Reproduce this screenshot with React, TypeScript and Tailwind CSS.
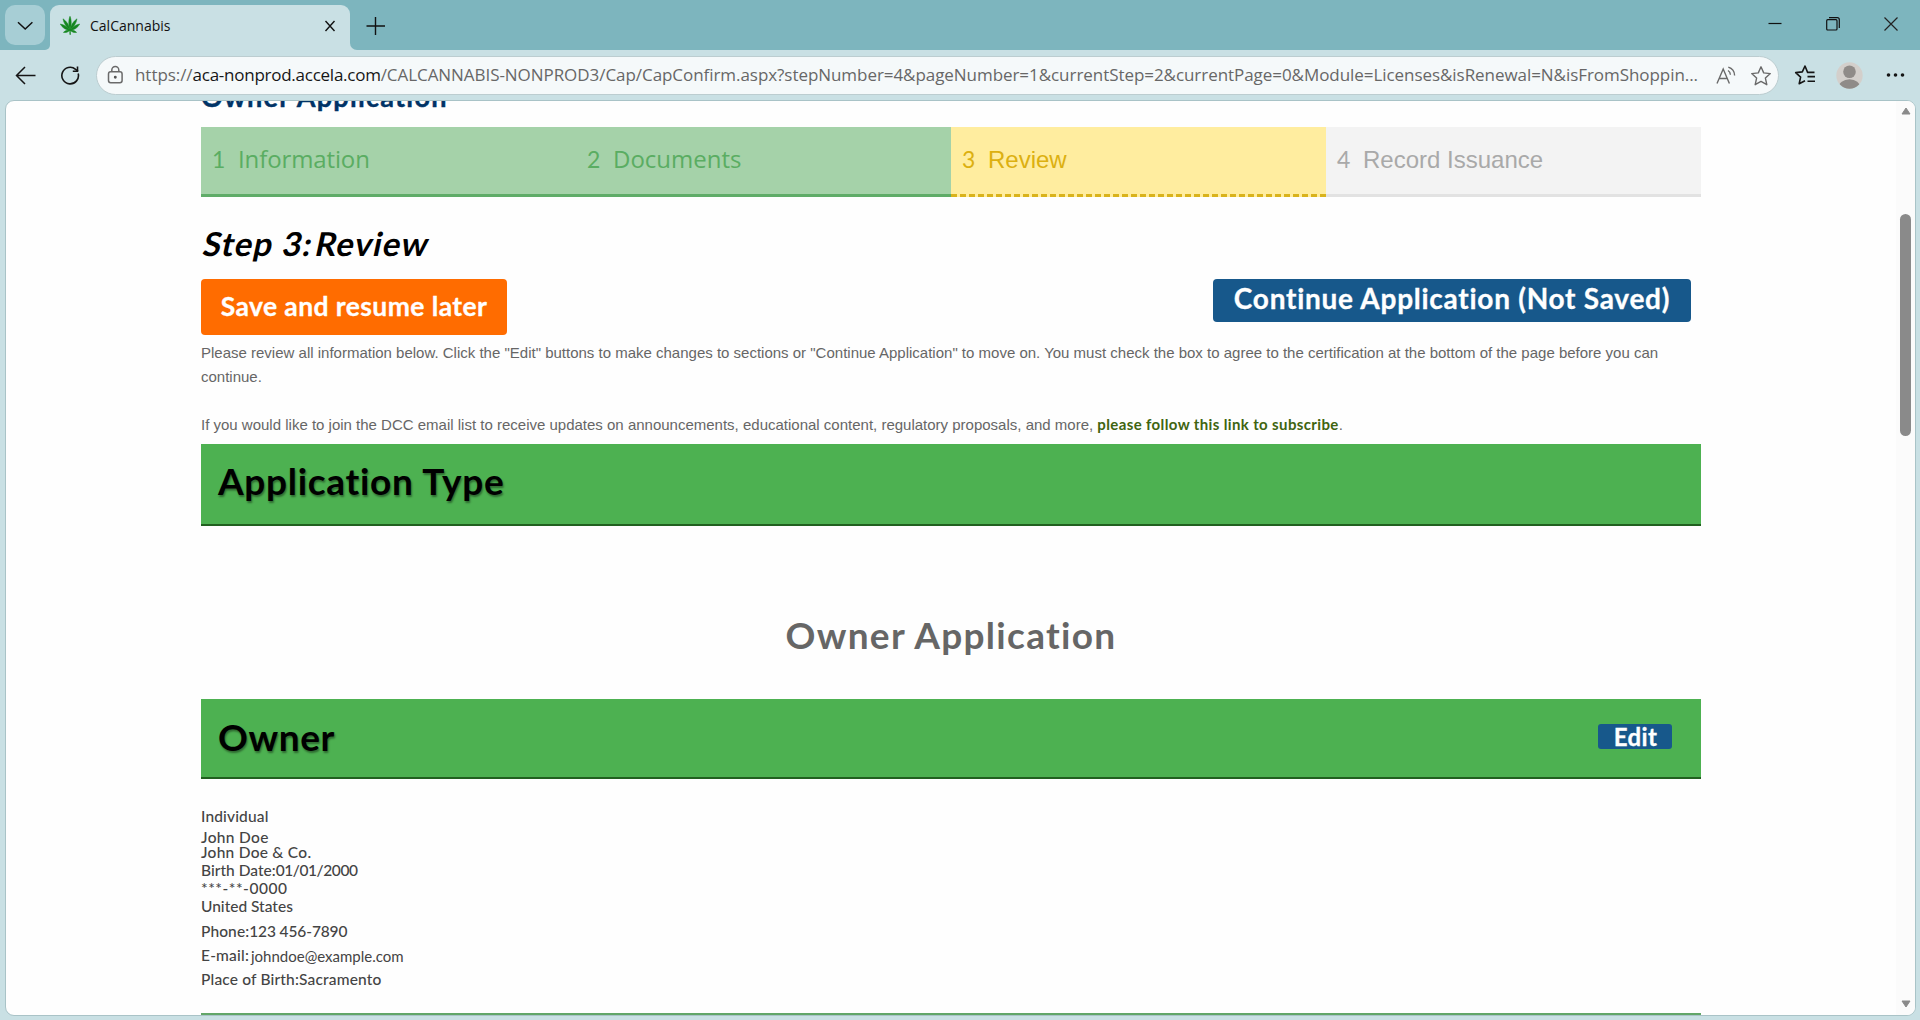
import type { ReactNode } from "react";

function LeafIcon() {
  return (
    <svg width="20" height="20" viewBox="0 0 20 20" fill="#14861f" stroke="#14861f" strokeWidth="0.500" strokeLinejoin="round">
      <path d="M10 0.300C8.500 3.600 8.200 8.800 10 14C11.800 8.800 11.500 3.600 10 0.300Z" />
      <path d="M3 2.800C3.600 7 6.200 11 9.800 14C9.400 9.400 6.800 5.400 3 2.800Z" />
      <path d="M17 2.800C16.400 7 13.800 11 10.200 14C10.600 9.400 13.200 5.400 17 2.800Z" />
      <path d="M0.300 8C2.300 11.800 5.600 13.900 9.800 14.400C7.600 11 4.300 8.800 0.300 8Z" />
      <path d="M19.700 8C17.700 11.800 14.400 13.900 10.200 14.400C12.400 11 15.700 8.800 19.700 8Z" />
      <path d="M3.400 16.400C5.700 16.900 8 16.300 9.900 14.200C7.500 13.800 5.300 14.600 3.400 16.400Z" />
      <path d="M16.600 16.400C14.300 16.900 12 16.300 10.100 14.200C12.500 13.800 14.700 14.600 16.600 16.400Z" />
      <path d="M9.700 13.500H10.300L10.500 18.500H9.800Z" />
    </svg>
  );
}

function TitleBar() {
  return (
    <div className="flex h-[50px] items-end bg-[#7db5be]">
      <div className="mb-[5px] ml-[5px] flex h-10 w-10 items-center justify-center rounded-[10px] bg-[#a7ced5]">
        <svg width="18" height="12" viewBox="0 0 18 12" fill="none" stroke="#111" strokeWidth="1.5">
          <path d="M2 3.200L9.200 10L16.400 3.200" />
        </svg>
      </div>
      <div className="h-[6px] w-[5px] bg-[#c9e0e4]">
        <div className="h-full w-full rounded-br-[6px] bg-[#7db5be]" />
      </div>
      <div className="flex h-[45px] w-[300px] items-center rounded-t-[9px] bg-[#c9e0e4] pb-[4px] pl-[10px] pr-[13px]">
        <LeafIcon />
        <span className="ml-[10px] flex-1 font-['Open_Sans'] text-[14px] text-[#111]">CalCannabis</span>
        <svg width="14" height="14" viewBox="0 0 14 14" fill="none" stroke="#111" strokeWidth="1.400">
          <path d="M2.500 2L11.500 12M11.500 2L2.500 12" />
        </svg>
      </div>
      <div className="h-[7px] w-[7px] bg-[#c9e0e4]">
        <div className="h-full w-full rounded-bl-[7px] bg-[#7db5be]" />
      </div>
      <div className="ml-[8px] flex h-[50px] flex-1 items-center pt-px">
        <svg width="20" height="20" viewBox="0 0 20 20" fill="none" stroke="#111" strokeWidth="1.400">
          <path d="M10.500 1V19M1.500 10H20" />
        </svg>
      </div>
      <div className="mb-[1px] mr-[1px] flex h-[50px] items-center">
        <div className="flex w-[58px] justify-center">
          <svg width="14" height="14" viewBox="0 0 14 14" stroke="#111" strokeWidth="1.200">
            <path d="M0.500 6.500H13.500" />
          </svg>
        </div>
        <div className="flex w-[58px] justify-center">
          <svg width="14" height="14" viewBox="0 0 14 14" fill="none" stroke="#111" strokeWidth="1.200">
            <rect x="0.700" y="2.700" width="10.300" height="10.300" rx="1" />
            <path d="M3 0.700H11.300A2 2 0 0 1 13.300 2.700V11" />
          </svg>
        </div>
        <div className="flex w-[57px] justify-center">
          <svg width="14" height="14" viewBox="0 0 14 14" fill="none" stroke="#222" strokeWidth="1.200">
            <path d="M0.500 0.500L13.500 13.500M13.500 0.500L0.500 13.500" />
          </svg>
        </div>
      </div>
    </div>
  );
}

function AddressBar() {
  return (
    <div className="flex h-[50px] items-center bg-[#c9e0e4]">
      <svg className="ml-[15px]" width="21" height="20" viewBox="0 0 21 20" fill="none" stroke="#151515" strokeWidth="1.500">
        <path d="M20.500 10.500H1.500M10 2L1.500 10.500L10 19" />
      </svg>
      <svg className="ml-[24px]" width="20" height="20" viewBox="0 0 20 20" fill="none" stroke="#151515" strokeWidth="1.600">
        <path d="M18.200 8.500A8.300 8.300 0 1 1 15.600 4.300L18 6.200" />
        <path d="M17.500 1.500V6.200H12.800" />
      </svg>
      <div className="ml-[16px] mt-[1px] flex h-[39px] w-[1683px] items-center rounded-full border border-[#bccdd0] bg-[#f5f9fa] pl-[10px]">
        <svg className="mb-[2px]" width="17" height="20" viewBox="0 0 17 20" fill="none" stroke="#6a6a6a" strokeWidth="1.500">
          <rect x="1.500" y="6.800" width="13.600" height="11" rx="2.200" />
          <path d="M4.800 6.800V5A3.500 3.500 0 0 1 11.800 5V6.800" />
          <circle cx="8.300" cy="12.300" r="0.700" fill="#555" stroke="#555" />
        </svg>
        <div className="ml-[11px] w-[1576px] whitespace-nowrap pb-[2px] font-['Open_Sans'] text-[17px] tracking-[-0.055px] text-[#676767]">
          https://<span className="tracking-[-0.25px] text-[#161616]">aca-nonprod.accela.com</span>
          /CALCANNABIS-NONPROD3/Cap/CapConfirm.aspx?stepNumber=4&amp;pageNumber=1&amp;currentStep=2&amp;currentPage=0&amp;Module=Licenses&amp;isRenewal=N&amp;isFromShoppin...
        </div>
        <svg className="ml-[5px]" width="20" height="20" viewBox="0 0 20 20" fill="none" stroke="#6a6a6a" strokeWidth="1.400">
          <path d="M1 17.500L7.200 3L13.400 17.500M3.400 12.500H11" />
          <path d="M12 4.500A5 5 0 0 1 14.400 8.800M12.300 1.200A9 9 0 0 1 18.600 9.500" />
        </svg>
        <svg className="ml-[14px]" width="22" height="22" viewBox="0 0 22 22" fill="none" stroke="#6a6a6a" strokeWidth="1.400" strokeLinejoin="round">
          <path d="M11 1.800L13.700 7.900L20.300 8.600L15.400 13.100L16.800 19.700L11 16.400L5.200 19.700L6.600 13.100L1.700 8.600L8.300 7.900Z" />
        </svg>
      </div>
      <svg className="ml-[15px]" width="22" height="22" viewBox="0 0 22 22" fill="none" stroke="#151515" strokeWidth="1.600" strokeLinejoin="round">
        <path d="M20.500 8.400H13.600L11 2L8.300 7.900L1.700 8.600L6.600 13.100L5.200 19.700L11 16.700" />
        <path d="M13.500 12.600H21M13.500 17.200H21" />
      </svg>
      <svg className="ml-[20px]" width="27" height="27" viewBox="0 0 27 27">
        <clipPath id="avatar">
          <circle cx="13.500" cy="13.500" r="13.200" />
        </clipPath>
        <circle cx="13.500" cy="13.500" r="13.200" fill="#d3cfcb" />
        <g clipPath="url(#avatar)" fill="#8f8b88">
          <circle cx="13.500" cy="9.800" r="6.300" />
          <ellipse cx="13.500" cy="26" rx="11" ry="8.700" />
        </g>
      </svg>
      <svg className="ml-[23px]" width="20" height="6" viewBox="0 0 20 6" fill="#151515">
        <circle cx="2.500" cy="3" r="1.800" />
        <circle cx="9.500" cy="3" r="1.800" />
        <circle cx="16.500" cy="3" r="1.800" />
      </svg>
    </div>
  );
}

function Step({ n, className, children }: { n: number; className: string; children: ReactNode }) {
  return (
    <div className={`flex h-[70px] w-[375px] items-baseline border-b-[3px] pl-[11px] pt-[14px] text-[24px] leading-[36px] ${className}`}>
      <span className="w-[26px] font-['Lato'] text-[23px]">{n}</span>
      {children}
    </div>
  );
}

function ScrollBar() {
  return (
    <div className="flex w-[19px] flex-col items-center bg-[#fbfbfb] pt-[6px]">
      <svg width="10" height="8" viewBox="0 0 10 8" fill="#8a8a8a" stroke="#8a8a8a" strokeLinejoin="round">
        <path d="M5 1L9 7H1Z" />
      </svg>
      <div className="mt-[99px] h-[222px] w-[11px] rounded-full bg-[#8a8a8a]" />
      <div className="flex-1" />
      <svg className="mb-[7px]" width="10" height="8" viewBox="0 0 10 8" fill="#8a8a8a" stroke="#8a8a8a" strokeLinejoin="round">
        <path d="M5 7L9 1H1Z" />
      </svg>
    </div>
  );
}

export default function App() {
  return (
    <div className="flex h-[1020px] w-[1920px] flex-col overflow-hidden bg-[#c9e0e4]">
      <TitleBar />
      <AddressBar />
      <div className="ml-[5px] flex h-[916px] w-[1911px] overflow-hidden rounded-[9px] border border-[#a9c3c7] bg-[#fefefe]">
        <main className="ml-[195px] w-[1500px] font-['Lato']">
          <h1 className="-mt-[20px] h-8 whitespace-nowrap text-[27px] font-bold leading-8 tracking-[1.250px] text-[#003366] [-webkit-text-stroke:0.400px_#003366]">Owner Application</h1>

          <div className="mt-[14px] flex">
            <Step n={1} className="border-[#5fac68] bg-[#a5d2a9] text-[#5aad62]">
              <span className="font-['Open_Sans'] tracking-[-0.120px]">Information</span>
            </Step>
            <Step n={2} className="border-[#5fac68] bg-[#a5d2a9] text-[#5aad62]">
              <span className="font-['Open_Sans']">Documents</span>
            </Step>
            <Step n={3} className="border-dashed border-[#d9b31c] bg-[#ffed9f] text-[#dcb011]">
              <span className="font-['Liberation_Sans']">Review</span>
            </Step>
            <Step n={4} className="border-[#e2e2e2] bg-[#f3f3f3] text-[#a9a9a9]">
              <span className="font-['Liberation_Sans']">Record Issuance</span>
            </Step>
          </div>

          <h2 className="mt-[26px] flex h-10 pl-[3px] text-[33px] font-bold leading-10 text-black">
            <span className="-skew-x-12 tracking-[1.100px]">
              Step 3<span className="tracking-[4px]">:</span>Review
            </span>
          </h2>

          <div className="mt-4 flex w-[1490px] items-start justify-between font-bold text-white [-webkit-text-stroke:0.300px_white]">
            <button className="h-14 w-[306px] whitespace-nowrap rounded-[4px] bg-[#ff6c00] pb-[1px] text-[26.500px] leading-[53px] tracking-[0.400px]">Save and resume later</button>
            <button className="h-[43px] w-[478px] whitespace-nowrap rounded-[4px] bg-[#17588b] pb-[5px] text-[28px] leading-[36px] tracking-[0.740px]">Continue Application (Not Saved)</button>
          </div>

          <p className="mt-[6px] h-[96px] font-['Liberation_Sans'] text-[15px] leading-6 text-[#666]">
            Please review all information below. Click the "Edit" buttons to make changes to sections or "Continue Application" to move on. You must check the box to agree to the certification at the bottom of the page before you can
            continue.
            <br />
            <br />
            If you would like to join the DCC email list to receive updates on announcements, educational content, regulatory proposals, and more,{" "}
            <a className="font-['Lato'] font-bold leading-none tracking-[0.370px] text-[#3f6410]">please follow this link to subscribe</a>.
          </p>

          <section className="mt-[7px] h-[82px] border-b-2 border-[#21601f] bg-[#4db151] pl-[17px] text-[37px] font-bold leading-[74px] tracking-[0.700px] text-black [text-shadow:1px_2px_2px_rgba(0,0,0,0.4)]">
            Application Type
          </section>

          <div className="mt-[87px] h-11 text-center text-[37px] font-bold leading-[44px] tracking-[1.300px] text-[#666]">Owner Application</div>

          <section className="mt-[42px] flex h-[80px] items-start justify-between border-b-2 border-[#21601f] bg-[#4db151] pl-[17px] pr-[29px] font-bold [text-shadow:1px_2px_2px_rgba(0,0,0,0.4)]">
            <span className="text-[37px] leading-[76px] tracking-[0.600px] text-black">Owner</span>
            <button className="mt-[25px] h-[25px] w-[74px] rounded-[3px] bg-[#17588b] pl-[1px] text-[24px] leading-[23px] tracking-[0.400px] text-white [-webkit-text-stroke:0.300px_white]">Edit</button>
          </section>

          <div className="mt-[28px] whitespace-nowrap text-[15.500px] font-medium leading-[18px] text-[#444]">
            <div className="h-[21px] tracking-[0.140px]">Individual</div>
            <div className="h-[15px] tracking-[0.320px]">John Doe</div>
            <div className="h-[18px] tracking-[0.260px]">John Doe &amp; Co.</div>
            <div className="h-[18px]">
              <span className="tracking-[0.020px]">Birth Date:</span>
              <span className="tracking-[-0.420px]">01/01/2000</span>
            </div>
            <div className="h-[18px] tracking-[0.560px]">***-**-0000</div>
            <div className="h-[25px]">United States</div>
            <div className="h-6">
              <span className="tracking-[0.100px]">Phone:</span>
              <span className="tracking-[-0.120px]">123 456-7890</span>
            </div>
            <div className="flex h-6">
              <span className="w-[50px] tracking-[0.200px]">E-mail:</span>
              <span className="pt-px text-[15px] font-normal">johndoe@example.com</span>
            </div>
            <div className="h-[18px] tracking-[0.170px]">Place of Birth:Sacramento</div>
          </div>
          <div className="mt-[25px] h-[2px] bg-[#62a668]" />
        </main>
        <div className="flex-1" />
        <ScrollBar />
      </div>
    </div>
  );
}
